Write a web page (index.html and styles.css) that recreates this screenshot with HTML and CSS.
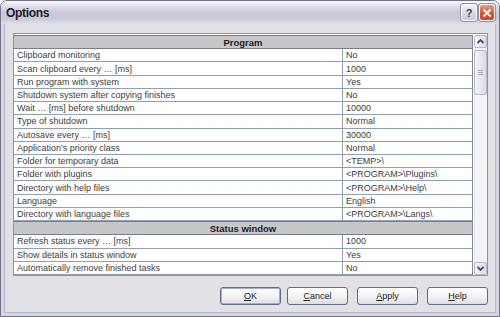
FILE: index.html
```html
<!DOCTYPE html>
<html lang="en">
	<head>
		<meta charset="UTF-8" />
		<meta name="viewport" content="width=device-width, initial-scale=1.0" />
		<title>Options</title>
		<link rel="stylesheet" href="styles.css">
	</head>
	<body>
		<div class="window">
			<div class="titlebar">
				<span class="title">Options</span>
				<div class="caption-buttons">
					<div class="cap cap-help">?</div>
					<div class="cap cap-close">
						<svg width="10" height="10" viewBox="0 0 10 10"><path d="M1.5 1.5 L8.5 8.5 M8.5 1.5 L1.5 8.5" stroke="#fff" stroke-width="1.8" fill="none" /></svg>
					</div>
				</div>
			</div>
			<div class="client">
				<div class="grid">
					<div class="rows">
						<div class="section">Program</div>
						<div class="row"><span class="name">Clipboard monitoring</span><span class="value">No</span></div>
						<div class="row"><span class="name">Scan clipboard every … [ms]</span><span class="value">1000</span></div>
						<div class="row"><span class="name">Run program with system</span><span class="value">Yes</span></div>
						<div class="row"><span class="name">Shutdown system after copying finishes</span><span class="value">No</span></div>
						<div class="row"><span class="name">Wait … [ms] before shutdown</span><span class="value">10000</span></div>
						<div class="row"><span class="name">Type of shutdown</span><span class="value">Normal</span></div>
						<div class="row"><span class="name">Autosave every … [ms]</span><span class="value">30000</span></div>
						<div class="row"><span class="name">Application's priority class</span><span class="value">Normal</span></div>
						<div class="row"><span class="name">Folder for temporary data</span><span class="value">&lt;TEMP&gt;\</span></div>
						<div class="row"><span class="name">Folder with plugins</span><span class="value">&lt;PROGRAM&gt;\Plugins\</span></div>
						<div class="row"><span class="name">Directory with help files</span><span class="value">&lt;PROGRAM&gt;\Help\</span></div>
						<div class="row"><span class="name">Language</span><span class="value">English</span></div>
						<div class="row"><span class="name">Directory with language files</span><span class="value">&lt;PROGRAM&gt;\Langs\</span></div>
						<div class="section">Status window</div>
						<div class="row"><span class="name">Refresh status every … [ms]</span><span class="value">1000</span></div>
						<div class="row"><span class="name">Show details in status window</span><span class="value">Yes</span></div>
						<div class="row"><span class="name">Automatically remove finished tasks</span><span class="value">No</span></div>
					</div>
					<div class="scrollbar">
						<div class="sb-btn">
							<svg width="11" height="11" viewBox="0 0 11 11"><polyline points="2.5,7 5.5,4 8.5,7" stroke="#4a4a66" stroke-width="1.8" fill="none" /></svg>
						</div>
						<div class="sb-track">
							<div class="sb-thumb"><span class="grip"></span></div>
						</div>
						<div class="sb-btn">
							<svg width="11" height="11" viewBox="0 0 11 11"><polyline points="2.5,4 5.5,7 8.5,4" stroke="#4a4a66" stroke-width="1.8" fill="none" /></svg>
						</div>
					</div>
				</div>
				<div class="buttons">
					<div class="btn btn-default"><u>O</u>K</div>
					<div class="btn"><u>C</u>ancel</div>
					<div class="btn"><u>A</u>pply</div>
					<div class="btn"><u>H</u>elp</div>
				</div>
			</div>
		</div>
	</body>
</html>
```

FILE: styles.css
```css
* {
	padding: 0;
	margin: 0;
	box-sizing: border-box;
}
body {
	overflow: hidden;
	background: #ffffff;
}
.window {
	display: flex;
	flex-direction: column;
	width: 500px;
	height: 317px;
	padding: 0 3px 3px;
	border: 1px solid #72728c;
	border-radius: 7px 7px 0 0;
	background: #d6d6e0;
	font-family: "Liberation Sans", Arial, sans-serif;
	color: #333;
}
.titlebar {
	display: flex;
	align-items: center;
	justify-content: space-between;
	height: 23px;
	margin: 0 -3px;
	padding: 0 4px 0 5px;
	border-radius: 6px 6px 0 0;
	background: linear-gradient(to bottom, #fbfbfd 0%, #e4e4ec 18%, #cbcadb 50%, #c9c8da 75%, #dfdfe8 100%);
}
.title {
	font-size: 12px;
	font-weight: bold;
	color: #1a1a22;
	letter-spacing: -0.3px;
}
.caption-buttons {
	display: flex;
	gap: 2px;
}
.cap {
	display: flex;
	align-items: center;
	justify-content: center;
	width: 16px;
	height: 17px;
	border-radius: 3px;
	border: 1px solid #fff;
	box-shadow: 0 0 0 1px #8e8ea6;
}
.cap-help {
	background: linear-gradient(to bottom, #eef0f6, #c6cadb);
	font-size: 11px;
	font-weight: bold;
	color: #3c3c58;
}
.cap-close {
	background: linear-gradient(to bottom, #ee9a80, #dc5434 55%, #d2462a);
}
.client {
	display: flex;
	flex-direction: column;
	flex: 1;
	padding: 9px 8px 8px 9px;
	background: #e2e2e6;
	box-shadow: inset 1px 0 0 #b8b8c8, inset -1px 0 0 #b8b8c8, inset 0 -1px 0 #b8b8c8;
}
.grid {
	display: flex;
	height: 243px;
	padding-top: 1px;
	border: 1px solid #8596ad;
	background: #ffffff;
}
.rows {
	display: flex;
	flex-direction: column;
	flex: 1;
	margin-right: 1px;
	border-right: 1px solid #7d8ba0;
}
.row,
.section {
	display: flex;
	align-items: center;
	flex: 1;
	font-size: 9px;
	border-bottom: 1px solid #8ca0b6;
}
.section {
	justify-content: center;
	font-size: 9.5px;
	font-weight: bold;
	color: #1e1e1e;
	background: #c7c7c9;
	border-top: 1px solid #77808e;
	border-bottom: 1px solid #77808e;
}
.name {
	width: 329px;
	height: 100%;
	display: flex;
	align-items: center;
	padding-left: 3px;
	border-right: 1px solid #8ca0b6;
	color: #3e3e3e;
}
.value {
	padding-left: 3px;
	color: #3e3e3e;
}
.scrollbar {
	display: flex;
	flex-direction: column;
	width: 13px;
	background: #f4f4f6;
}
.sb-btn {
	display: flex;
	align-items: center;
	justify-content: center;
	height: 13px;
	border: 1px solid #b8b8c8;
	border-radius: 2px;
	background: linear-gradient(to right, #f6f6fa, #dcdce6);
}
.sb-track {
	flex: 1;
	padding-top: 2px;
	border-left: 1px solid #e6e6ec;
}
.sb-thumb {
	display: flex;
	align-items: center;
	justify-content: center;
	height: 45px;
	margin-left: -1px;
	border: 1px solid #b8b8c8;
	border-radius: 2px;
	background: linear-gradient(to right, #f2f2f6, #dcdce6);
}
.grip {
	width: 5px;
	height: 5px;
	border-top: 1px solid #a8a8ba;
	border-bottom: 1px solid #a8a8ba;
	background: linear-gradient(to bottom, transparent 1px, #a8a8ba 1px, #a8a8ba 2px, transparent 2px);
}
.buttons {
	display: flex;
	justify-content: flex-end;
	gap: 9px;
	margin-top: 11px;
}
.btn {
	display: flex;
	align-items: center;
	justify-content: center;
	width: 61px;
	height: 18px;
	border: 1px solid #5d6d8c;
	border-radius: 3px;
	background: linear-gradient(to bottom, #ffffff 0%, #f1f1f4 60%, #dcdce2 100%);
	font-size: 9px;
	color: #222;
}
.btn-default {
	margin-right: -3px;
	box-shadow: inset 0 0 0 1px #9fb0d4;
}
```
